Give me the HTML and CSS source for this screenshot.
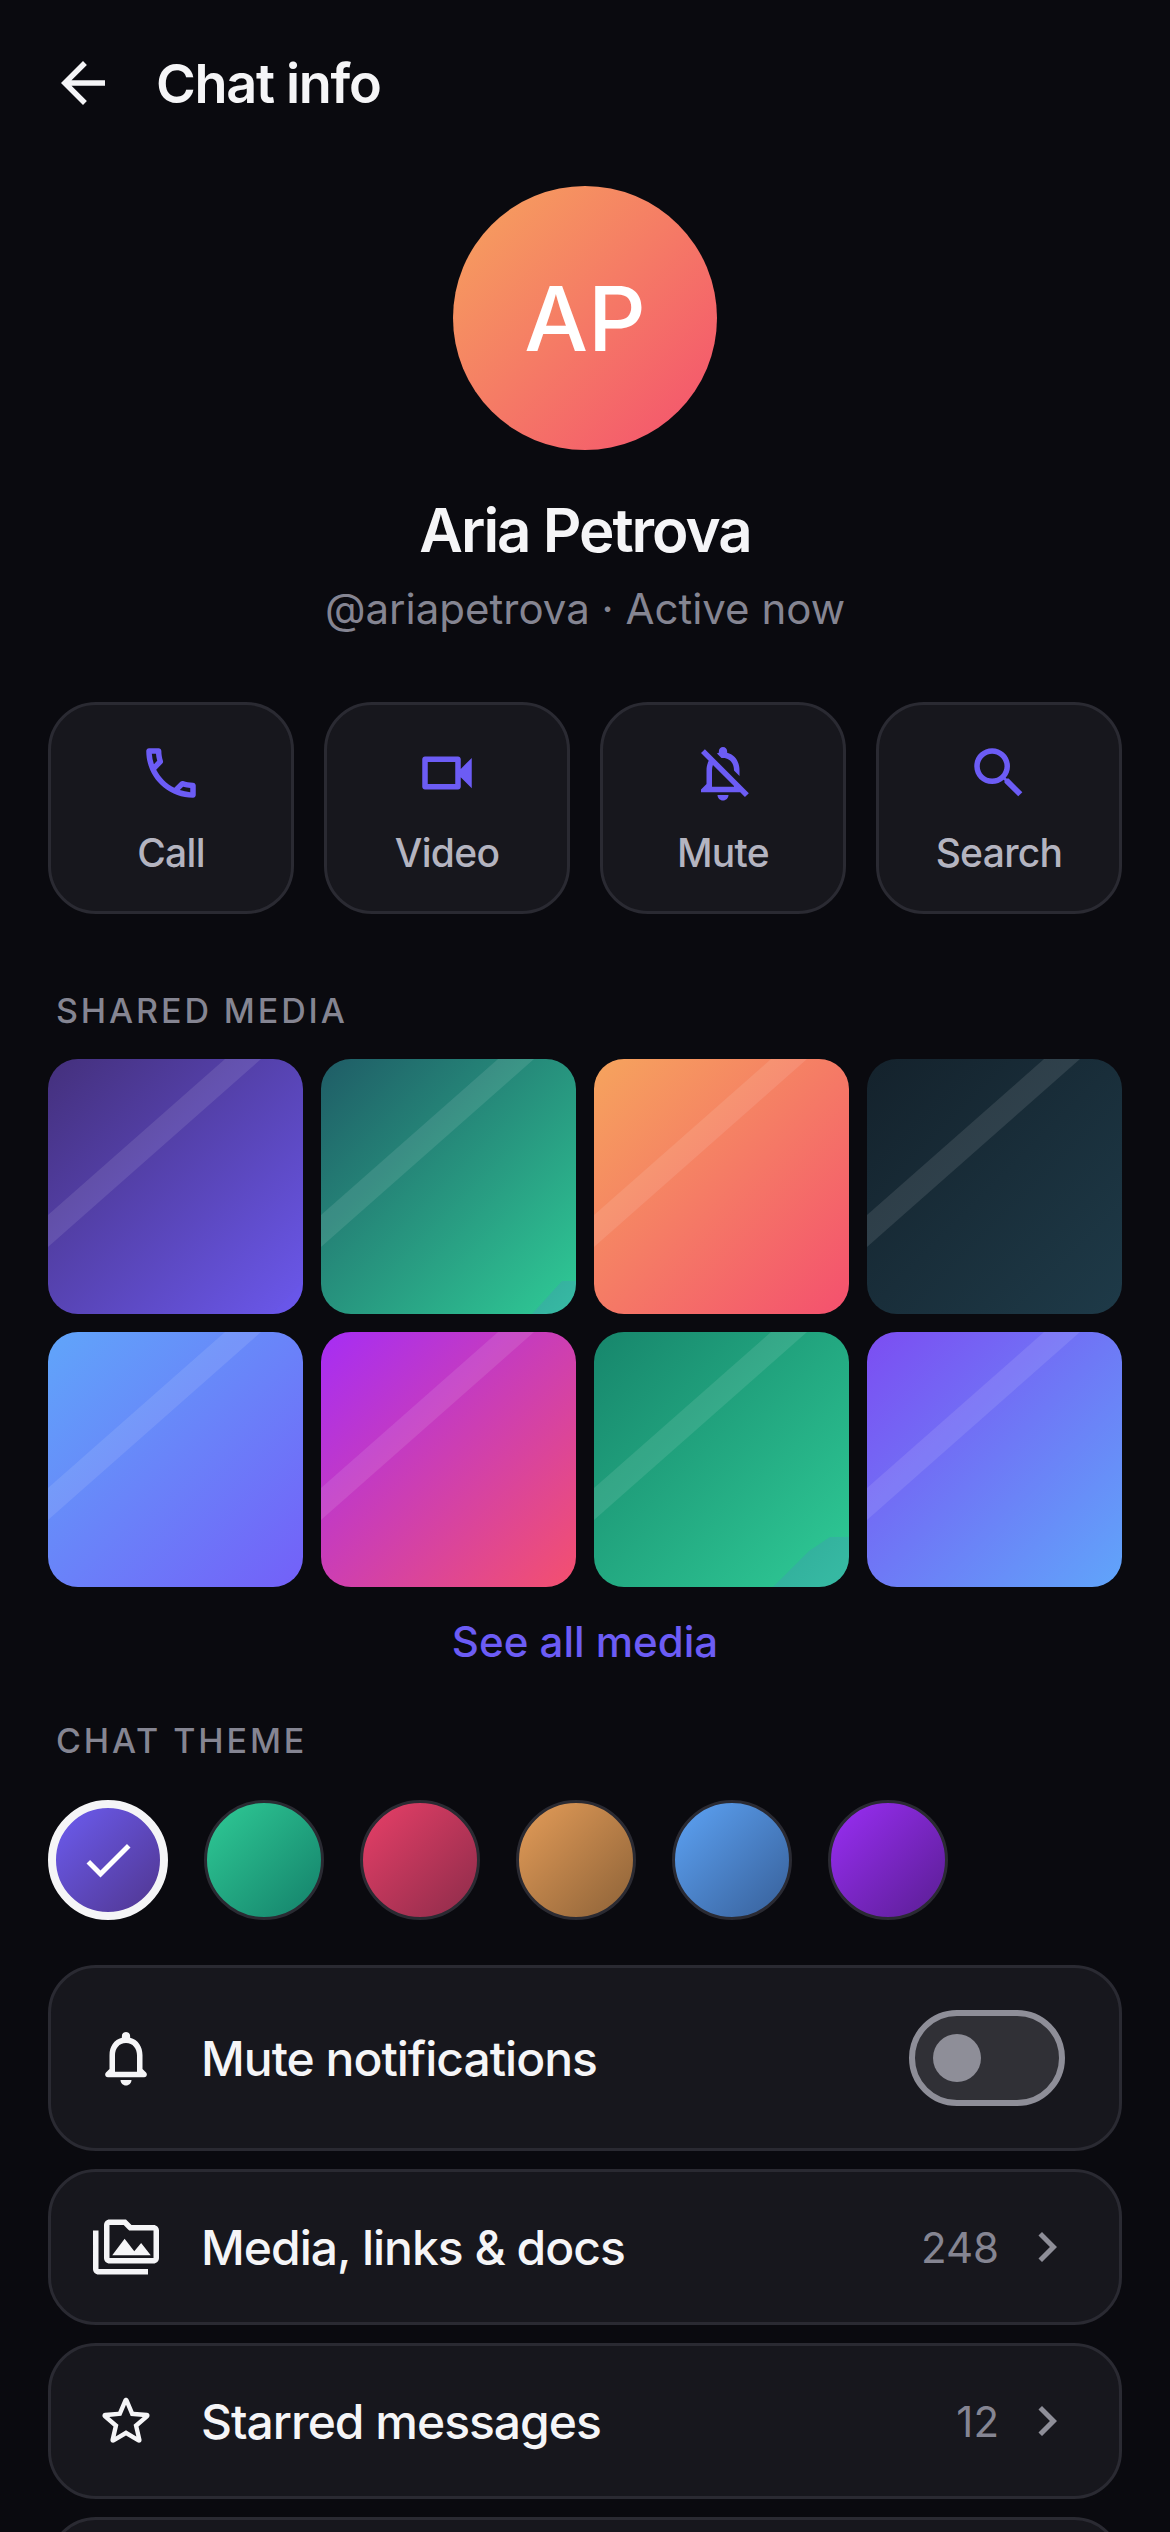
FILE: index.html
```html
<!DOCTYPE html>
<html lang="en">
<head>
  <meta charset="UTF-8">
  <meta name="viewport" content="width=device-width, initial-scale=1.0">
  <title>Chat info</title>
  <link rel="stylesheet" href="styles.css">
</head>
<body>
  <header class="topbar">
    <svg class="back-icon" viewBox="0 0 24 24"><path d="M20 11H7.83l5.59-5.59L12 4l-8 8 8 8 1.41-1.41L7.83 13H20v-2z"/></svg>
    <h1>Chat info</h1>
  </header>

  <section class="profile">
    <div class="avatar">AP</div>
    <h2 class="name">Aria Petrova</h2>
    <p class="handle">@ariapetrova · Active now</p>
  </section>

  <section class="actions">
    <div class="action">
      <svg viewBox="0 0 24 24"><path d="M6.54 5c.06.89.21 1.76.45 2.59l-1.2 1.2c-.41-1.2-.67-2.47-.76-3.79h1.51m9.86 12.02c.85.24 1.72.39 2.6.45v1.49c-1.32-.09-2.59-.35-3.8-.75l1.2-1.19M7.5 3H4c-.55 0-1 .45-1 1 0 9.39 7.61 17 17 17 .55 0 1-.45 1-1v-3.49c0-.55-.45-1-1-1-1.24 0-2.45-.2-3.57-.57-.1-.04-.21-.05-.31-.05-.26 0-.51.1-.71.29l-2.2 2.2c-2.83-1.45-5.15-3.76-6.59-6.59l2.2-2.2c.28-.28.36-.67.25-1.02C8.7 6.45 8.5 5.25 8.5 4c0-.55-.45-1-1-1z"/></svg>
      <span>Call</span>
    </div>
    <div class="action">
      <svg viewBox="0 0 24 24"><path d="M15 8v8H5V8h10m1-2H4c-.55 0-1 .45-1 1v10c0 .55.45 1 1 1h12c.55 0 1-.45 1-1v-3.5l4 4v-11l-4 4V7c0-.55-.45-1-1-1z"/></svg>
      <span>Video</span>
    </div>
    <div class="action">
      <svg viewBox="0 0 24 24"><path d="M12 22c1.1 0 2-.9 2-2h-4c0 1.1.9 2 2 2zm0-15.5c2.49 0 4 2.02 4 4.5v.1l2 2V11c0-3.07-1.63-5.64-4.5-6.32V4c0-.83-.67-1.5-1.5-1.5s-1.5.67-1.5 1.5v.68c-.24.06-.47.15-.69.23l1.64 1.64c.18-.02.36-.05.55-.05zM5.41 3.35L4 4.76l2.81 2.81C6.29 8.57 6 9.74 6 11v5l-2 2v1h14.24l1.74 1.74 1.41-1.41L5.41 3.35zM16 17H8v-6c0-.68.12-1.32.34-1.9L16 16.76V17z"/></svg>
      <span>Mute</span>
    </div>
    <div class="action">
      <svg viewBox="0 0 24 24"><path d="M15.5 14h-.79l-.28-.27C15.41 12.59 16 11.11 16 9.5 16 5.91 13.09 3 9.5 3S3 5.91 3 9.5 5.91 16 9.5 16c1.61 0 3.09-.59 4.23-1.57l.27.28v.79l5 4.99L20.49 19l-4.99-5zm-6 0C7.01 14 5 11.99 5 9.5S7.01 5 9.5 5 14 7.01 14 9.5 11.99 14 9.5 14z"/></svg>
      <span>Search</span>
    </div>
  </section>

  <h3 class="section-label media-label">SHARED MEDIA</h3>
  <section class="media-grid">
    <div class="tile tile-1"></div>
    <div class="tile tile-2"></div>
    <div class="tile tile-3"></div>
    <div class="tile tile-4"></div>
    <div class="tile tile-5"></div>
    <div class="tile tile-6"></div>
    <div class="tile tile-7"></div>
    <div class="tile tile-8"></div>
  </section>
  <a class="see-all">See all media</a>

  <h3 class="section-label theme-label">CHAT THEME</h3>
  <section class="themes">
    <div class="swatch swatch-1 selected">
      <svg viewBox="0 0 24 24"><path d="M9 16.17L4.83 12l-1.42 1.41L9 19 21 7l-1.41-1.41z"/></svg>
    </div>
    <div class="swatch swatch-2"></div>
    <div class="swatch swatch-3"></div>
    <div class="swatch swatch-4"></div>
    <div class="swatch swatch-5"></div>
    <div class="swatch swatch-6"></div>
  </section>

  <section class="rows">
    <div class="row">
      <svg class="row-icon" viewBox="0 0 24 24"><path d="M19.29 17.29L18 16v-5c0-3.07-1.64-5.64-4.5-6.32V4c0-.83-.67-1.5-1.5-1.5s-1.5.67-1.5 1.5v.68C7.63 5.36 6 7.92 6 11v5l-1.29 1.29c-.63.63-.19 1.71.7 1.71h13.17c.9 0 1.34-1.08.71-1.71zM16 17H8v-6c0-2.48 1.51-4.5 4-4.5s4 2.02 4 4.5v6zm-4 5c1.1 0 2-.9 2-2h-4c0 1.1.9 2 2 2z"/></svg>
      <span class="row-label">Mute notifications</span>
      <div class="toggle"><div class="thumb"></div></div>
    </div>
    <div class="row">
      <svg class="row-icon" viewBox="0 0 24 24"><path d="M2 6H0v5h.01L0 20c0 1.1.9 2 2 2h18v-2H2V6zm5 9h14l-3.5-4.5-2.5 3.01L11.5 9zM22 4h-8l-2-2H6c-1.1 0-1.99.9-1.99 2L4 16c0 1.1.9 2 2 2h16c1.1 0 2-.9 2-2V6c0-1.1-.9-2-2-2zm0 12H6V4h5.17l1.41 1.41.59.59H22v10z"/></svg>
      <span class="row-label">Media, links &amp; docs</span>
      <span class="count">248</span>
      <svg class="chevron" viewBox="0 0 24 24"><path d="M10 6L8.59 7.41 13.17 12l-4.58 4.59L10 18l6-6z"/></svg>
    </div>
    <div class="row">
      <svg class="row-icon" viewBox="0 0 24 24"><path d="M19.65 9.04l-4.84-.42-1.89-4.45c-.34-.81-1.5-.81-1.84 0L9.19 8.63l-4.84.41c-.88.07-1.24 1.17-.57 1.75l3.67 3.18-1.1 4.72c-.2.86.73 1.54 1.49 1.08l4.16-2.51 4.16 2.51c.76.46 1.69-.22 1.49-1.08l-1.1-4.73 3.67-3.18c.67-.58.32-1.68-.56-1.74zM12 15.4l-3.76 2.27 1-4.28-3.32-2.88 4.38-.38L12 6.1l1.71 4.04 4.38.38-3.32 2.88 1 4.28L12 15.4z"/></svg>
      <span class="row-label">Starred messages</span>
      <span class="count">12</span>
      <svg class="chevron" viewBox="0 0 24 24"><path d="M10 6L8.59 7.41 13.17 12l-4.58 4.59L10 18l6-6z"/></svg>
    </div>
    <div class="row row-cut"></div>
  </section>
</body>
</html>
```

FILE: styles.css
```css
* {
  box-sizing: border-box;
}

html, body {
  height: 100%;
  overflow: hidden;
}

body {
  margin: 0;
  padding: 0 48px;
  background-color: #0a0a0f;
  color: #f5f5f7;
  font-family: 'Inter', sans-serif;
}

h1, h2, h3, p {
  margin: 0;
}

svg {
  display: block;
  fill: currentColor;
}

.topbar {
  display: flex;
  align-items: center;
  height: 66px;
  margin-top: 50px;
}

.back-icon {
  width: 66px;
  height: 66px;
  margin-left: 2px;
}

.topbar h1 {
  margin-left: 40px;
  font-size: 54px;
  font-weight: 600;
  letter-spacing: -1.3px;
}

.profile {
  display: flex;
  flex-direction: column;
  align-items: center;
  margin-top: 70px;
}

.avatar {
  display: flex;
  align-items: center;
  justify-content: center;
  width: 264px;
  height: 264px;
  border-radius: 50%;
  background: linear-gradient(135deg, #f6a45d, #f4506e);
  font-size: 90px;
  font-weight: 500;
  color: #fff;
}

.name {
  margin-top: 44px;
  font-size: 60px;
  line-height: 72px;
  font-weight: 600;
  letter-spacing: -2px;
}

.handle {
  margin-top: 16px;
  font-size: 42px;
  line-height: 54px;
  color: #858592;
}

.actions {
  display: grid;
  grid-template-columns: repeat(4, 1fr);
  gap: 30px;
  margin-top: 66px;
}

.action {
  display: flex;
  flex-direction: column;
  align-items: center;
  height: 212px;
  padding-top: 35px;
  background-color: #17171d;
  border: 3px solid #2a2a32;
  border-radius: 48px;
  color: #b4b4c0;
  font-size: 39px;
  font-weight: 500;
  letter-spacing: -0.7px;
}

.action svg {
  width: 66px;
  height: 66px;
  margin-bottom: 23px;
  color: #6c5cf5;
}

.section-label {
  margin-left: 8px;
  font-size: 34px;
  line-height: 44px;
  font-weight: 500;
  letter-spacing: 2.9px;
  color: #858592;
}

.media-label {
  margin-top: 75px;
}

.media-grid {
  display: grid;
  grid-template-columns: repeat(4, 1fr);
  gap: 18px;
  margin-top: 26px;
}

.tile {
  position: relative;
  height: 255px;
  border-radius: 30px;
  overflow: hidden;
}

/* diagonal sheen across every tile */
.tile::before {
  content: '';
  position: absolute;
  inset: 0;
  background: rgba(255, 255, 255, 0.1);
  clip-path: polygon(177px 0, 213px 0, 0 188px, 0 156px);
}

/* faint shape in the lower right corner of some tiles */
.tile-1::after, .tile-2::after, .tile-7::after {
  content: '';
  position: absolute;
  inset: 0;
  background: rgba(108, 92, 245, 0.14);
}

.tile-1::after { clip-path: polygon(224px 255px, 255px 222px, 255px 255px); }
.tile-2::after { clip-path: polygon(211px 255px, 241px 222px, 255px 222px, 255px 255px); }
.tile-7::after { clip-path: polygon(179px 255px, 215px 219px, 236px 205px, 255px 205px, 255px 255px); }

.tile-1 { background: linear-gradient(135deg, #44307c, #6b58ec); }
.tile-2 { background: linear-gradient(135deg, #1f5c66, #2fcb96); }
.tile-3 { background: linear-gradient(135deg, #f6a45d, #f4506e); }
.tile-4 { background: linear-gradient(135deg, #14222c, #1e3a48); }
.tile-5 { background: linear-gradient(135deg, #60a5fa, #7360f8); }
.tile-6 { background: linear-gradient(135deg, #a62df5, #f4506e); }
.tile-7 { background: linear-gradient(135deg, #17866c, #2fcb96); }
.tile-8 { background: linear-gradient(135deg, #7c4df2, #60a5fa); }

.see-all {
  display: block;
  margin-top: 28px;
  text-align: center;
  font-size: 42px;
  line-height: 54px;
  font-weight: 500;
  color: #6c5cf5;
}

.theme-label {
  margin-top: 50px;
}

.themes {
  display: flex;
  gap: 36px;
  margin-top: 37px;
}

.swatch {
  display: flex;
  align-items: center;
  justify-content: center;
  width: 120px;
  height: 120px;
  border: 3px solid #2a2a32;
  border-radius: 50%;
  color: #fff;
}

.swatch.selected {
  border: 8px solid #f5f5f7;
}

.swatch svg {
  width: 60px;
  height: 60px;
}

.swatch-1 { background: linear-gradient(135deg, #6c5cf0, #50368f); }
.swatch-2 { background: linear-gradient(135deg, #2fcb96, #14806a); }
.swatch-3 { background: linear-gradient(135deg, #e83f68, #8c2c4a); }
.swatch-4 { background: linear-gradient(135deg, #e49c58, #8c6238); }
.swatch-5 { background: linear-gradient(135deg, #5da3f5, #375f98); }
.swatch-6 { background: linear-gradient(135deg, #9a2ef5, #591e92); }

.rows {
  display: flex;
  flex-direction: column;
  gap: 18px;
  margin-top: 45px;
}

.row {
  display: flex;
  align-items: center;
  flex-shrink: 0;
  padding: 42px;
  background-color: #17171d;
  border: 3px solid #2a2a32;
  border-radius: 48px;
}

.row-cut {
  height: 156px;
}

.row-icon {
  width: 66px;
  height: 66px;
  margin-right: 42px;
}

.row-label {
  flex: 1;
  font-size: 48px;
  font-weight: 500;
  letter-spacing: -1px;
}

.count {
  margin-right: 18px;
  font-size: 42px;
  color: #858592;
}

.chevron {
  width: 60px;
  height: 60px;
  color: #8e8e98;
}

.toggle {
  display: flex;
  align-items: center;
  width: 156px;
  height: 96px;
  margin-right: 12px;
  padding-left: 18px;
  background-color: #303036;
  border: 6px solid #8e8e98;
  border-radius: 48px;
}

.thumb {
  width: 48px;
  height: 48px;
  border-radius: 50%;
  background-color: #8e8e98;
}
```
